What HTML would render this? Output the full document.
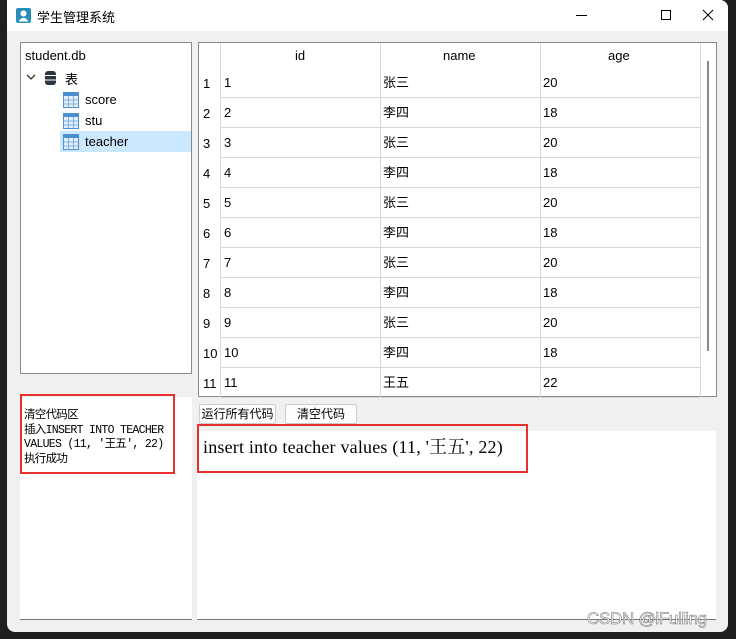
<!DOCTYPE html>
<html><head><meta charset="utf-8"><style>
*{margin:0;padding:0;box-sizing:border-box}
body{width:736px;height:639px;background:#1f1f1f;position:relative;overflow:hidden;font-family:"Liberation Sans","Noto Sans CJK SC",sans-serif;font-size:13px;color:#000}
.win{position:absolute;left:7px;top:0;width:721px;height:632px;background:#f0f0f0;border-radius:0 8px 8px 8px;overflow:hidden}
.title{position:absolute;left:0;top:0;width:100%;height:31px;background:#fff}
.abs{position:absolute}
.tree{left:13px;top:42px;width:172px;height:332px;background:#fff;border:1px solid #8a8a8a}
.tbl{left:191px;top:42px;width:519px;height:355px;background:#fff;border:1px solid #8a8a8a}
.cell{position:absolute;font-size:13px;line-height:30px}
.hl{position:absolute;background:#d8d8d8}
.red{position:absolute;border:2px solid #e8302e}
</style></head><body>
<div class="win">
<div class="title">
 <svg class="abs" style="left:9px;top:8px" width="15" height="15"><rect width="15" height="15" rx="2" fill="#2a8fb8"/><circle cx="7.5" cy="5.5" r="3" fill="#fff"/><path d="M2.5 13.5 Q7.5 6 12.5 13.5Z" fill="#fff"/></svg>
 <div class="abs" style="left:30px;top:7px;font-size:13px">学生管理系统</div>
 <div class="abs" style="left:569px;top:15px;width:11px;height:1px;background:#000"></div>
 <div class="abs" style="left:654px;top:10px;width:10px;height:10px;border:1px solid #000"></div>
 <svg class="abs" style="left:695px;top:9px" width="12" height="12"><path d="M1 1L11 11M11 1L1 11" stroke="#000" stroke-width="1"/></svg>
</div>
<div class="abs tree">
 <div class="abs" style="left:4px;top:5px">student.db</div>
 <svg class="abs" style="left:5px;top:30px" width="10" height="8"><path d="M1 2L5 6L9 2" stroke="#333" fill="none" stroke-width="1.3"/></svg>
 <svg class="abs" style="left:24px;top:28px" width="11" height="14"><rect x="0" y="0" width="11" height="14" rx="3" fill="#2c3540"/><path d="M0 4.5H11M0 9H11" stroke="#fff" stroke-width="1"/></svg>
 <div class="abs" style="left:44px;top:26px">表</div>
 <div class="abs" style="left:39px;top:88px;width:131px;height:21px;background:#cce8ff"></div>
 <svg class="abs" style="left:42px;top:49px" width="16" height="16"><rect x=".5" y=".5" width="15" height="15" fill="#e3f0fb" stroke="#4b8fd0"/><rect x=".5" y=".5" width="15" height="3.5" fill="#4b8fd0"/><path d="M.5 8H15.5M.5 12H15.5M5.5 4V15.5M10.5 4V15.5" stroke="#7fb0e0"/></svg>
 <div class="abs" style="left:64px;top:49px">score</div>
 <svg class="abs" style="left:42px;top:70px" width="16" height="16"><rect x=".5" y=".5" width="15" height="15" fill="#e3f0fb" stroke="#4b8fd0"/><rect x=".5" y=".5" width="15" height="3.5" fill="#4b8fd0"/><path d="M.5 8H15.5M.5 12H15.5M5.5 4V15.5M10.5 4V15.5" stroke="#7fb0e0"/></svg>
 <div class="abs" style="left:64px;top:70px">stu</div>
 <svg class="abs" style="left:42px;top:91px" width="16" height="16"><rect x=".5" y=".5" width="15" height="15" fill="#e3f0fb" stroke="#4b8fd0"/><rect x=".5" y=".5" width="15" height="3.5" fill="#4b8fd0"/><path d="M.5 8H15.5M.5 12H15.5M5.5 4V15.5M10.5 4V15.5" stroke="#7fb0e0"/></svg>
 <div class="abs" style="left:64px;top:91px">teacher</div>
</div>
<div class="abs tbl" id="t">
 <div class="hl" style="left:21px;top:0;width:1px;height:355px"></div>
 <div class="hl" style="left:181px;top:0;width:1px;height:355px"></div>
 <div class="hl" style="left:341px;top:0;width:1px;height:355px"></div>
 <div class="hl" style="left:501px;top:0;width:1px;height:355px"></div>
 <div class="abs" style="left:508px;top:18px;width:2px;height:290px;background:#8a8a8a"></div>
 <div class="cell" style="left:96px;top:-2px">id</div>
 <div class="cell" style="left:244px;top:-2px">name</div>
 <div class="cell" style="left:409px;top:-2px">age</div>
</div>
<div class="abs" style="left:13px;top:397px;width:172px;height:223px;background:#fff;border-bottom:1px solid #777"></div>
<div class="abs" style="left:17px;top:409px;font-family:'Liberation Mono','Noto Sans CJK SC',monospace;font-size:11.5px;line-height:14.5px;letter-spacing:-0.7px">清空代码区<br>插入INSERT INTO TEACHER<br>VALUES (11, '王五', 22)<br>执行成功</div>
<div class="abs" style="left:192px;top:404px;width:77px;height:20px;background:#fdfdfd;border:1px solid #ccc;border-radius:2px;font-size:12px;line-height:18px;text-align:center">运行所有代码</div>
<div class="abs" style="left:278px;top:404px;width:72px;height:20px;background:#fdfdfd;border:1px solid #ccc;border-radius:2px;font-size:12px;line-height:18px;text-align:center">清空代码</div>
<div class="abs" style="left:190px;top:431px;width:519px;height:189px;background:#fff;border-bottom:1px solid #777"></div>
<div class="abs" style="left:196px;top:433px;font-family:'Liberation Serif','Noto Serif CJK SC',serif;font-size:18px;letter-spacing:0.2px">insert into teacher values (11, '王五', 22)</div>
<div class="red" style="left:13px;top:394px;width:155px;height:80px"></div>
<div class="red" style="left:190px;top:424px;width:331px;height:49px"></div>
</div>
<div class="abs" style="left:587px;top:609px;font-size:17px;color:#fff;-webkit-text-stroke:0.5px #666;letter-spacing:-0.3px">CSDN @iFulling</div>
<script>
var t=document.getElementById('t'),n=['张三','李四'],h='';
for(var i=1;i<=11;i++){var y=25+(i-1)*30;var nm=i==11?'王五':n[(i+1)%2],ag=i==11?'22':(i%2?'20':'18');
h+='<div class="hl" style="left:21px;top:'+(y+29)+'px;width:480px;height:1px"></div>';
h+='<div class="cell" style="left:4px;top:'+(y+1)+'px">'+i+'</div><div class="cell" style="left:25px;top:'+y+'px">'+i+'</div><div class="cell" style="left:184px;top:'+y+'px">'+nm+'</div><div class="cell" style="left:344px;top:'+y+'px">'+ag+'</div>';}
t.insertAdjacentHTML('beforeend',h);
</script>
</body></html>
